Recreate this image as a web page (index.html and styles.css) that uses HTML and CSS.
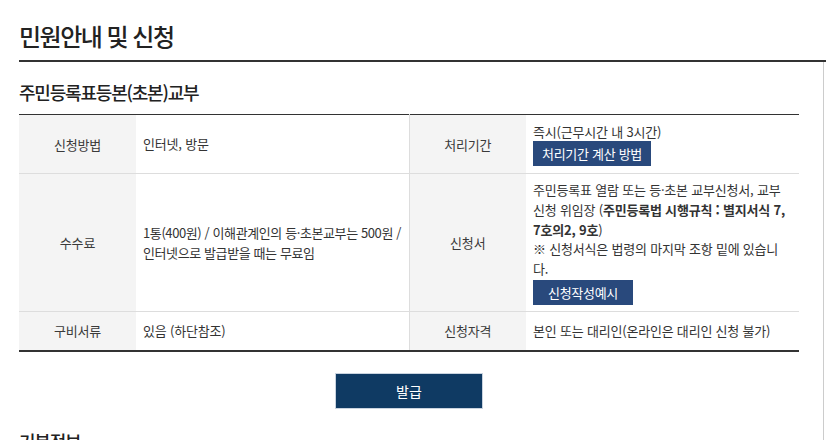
FILE: index.html
```html
<!DOCTYPE html>
<html lang="ko">
<head>
<meta charset="utf-8">
<link rel="stylesheet" href="styles.css">
</head>
<body>
<div class="page">
  <h1 class="title">민원안내 및 신청</h1>
  <div class="content">
    <h2 class="subtitle">주민등록표등본(초본)교부</h2>
    <table class="info">
      <colgroup>
        <col class="c-th"><col class="c-td1"><col class="c-th"><col class="c-td2">
      </colgroup>
      <tr class="r1">
        <th>신청방법</th>
        <td>인터넷, 방문</td>
        <th class="th2">처리기간</th>
        <td>즉시(근무시간 내 3시간)<br><span class="btn">처리기간 계산 방법</span></td>
      </tr>
      <tr class="r2">
        <th>수수료</th>
        <td class="fee">1통(400원) / 이해관계인의 등·초본교부는 500원 /<br>인터넷으로 발급받을 때는 무료임</td>
        <th class="th2">신청서</th>
        <td class="lh">주민등록표 열람 또는 등·초본 교부신청서, 교부<br>신청 위임장 (<b>주민등록법 시행규칙 : 별지서식 7,<br>7호의2, 9호</b>)<br>※ 신청서식은 법령의 마지막 조항 밑에 있습니<br>다.<br><span class="btn btn2">신청작성예시</span></td>
      </tr>
      <tr class="r3">
        <th>구비서류</th>
        <td>있음 (하단참조)</td>
        <th class="th2">신청자격</th>
        <td>본인 또는 대리인(온라인은 대리인 신청 불가)</td>
      </tr>
    </table>
    <div class="actions"><span class="issue">발급</span></div>
    <h2 class="subtitle sub2">기본정보</h2>
  </div>
</div>
</body>
</html>
```
FILE: styles.css
```css
html, body { margin: 0; padding: 0; background: #fff; }
body { font-family: "Noto Sans CJK KR", "Noto Sans", sans-serif; color: #333; overflow: hidden; height: 440px; }
.page { padding-left: 19px; height: 440px; overflow: hidden; }
.title {
  margin: 0;
  padding-top: 18px;
  height: 42px;
  font-size: 24px;
  font-weight: 500;
  letter-spacing: -1.5px;
  line-height: 36px;
  color: #222;
  border-bottom: 2px solid #333;
}
.content {
  border-right: 1px solid #ccc;
  margin-right: 2px;
  padding-right: 24px;
  height: 378px;
  overflow: hidden;
}
.subtitle {
  margin: 0;
  padding-top: 17px;
  height: 35px;
  font-size: 18px;
  font-weight: 500;
  letter-spacing: -1.2px;
  line-height: 26px;
  color: #222;
}
.info {
  width: 100%;
  border-collapse: collapse;
  border-top: 1px solid #333;
  border-bottom: 2px solid #333;
  font-size: 13px;
  letter-spacing: -0.2px;
}
.c-th { width: 117px; }
.c-td1 { width: 273px; }
.info th {
  background: #f4f4f4;
  font-weight: 400;
  color: #3a3a3a;
  text-align: center;
  padding: 0;
}
.info td {
  padding: 0 7px;
  text-align: left;
  vertical-align: middle;
  color: #333;
}
.info tr { border-bottom: 1px solid #ddd; }
.info tr.r3 { border-bottom: 0; }
.th2 { border-left: 1px solid #ddd; }
.r1 { height: 59px; }
.r2 { height: 138px; }
.r3 { height: 39px; }
.fee { line-height: 20px; white-space: nowrap; letter-spacing: -0.4px; }
.lh { line-height: 19.8px; white-space: nowrap; }
.r1 td { line-height: 18px; }
.info b { font-weight: 700; }
.btn {
  display: inline-block;
  background: #29497c;
  color: #fff;
  font-size: 13px;
  line-height: 25px;
  padding: 0 9px;
  letter-spacing: -0.3px;
}
.btn2 { padding: 0 15px; margin-top: 1px; }
.actions {
  display: flex;
  justify-content: center;
  padding-top: 21px;
}
.issue {
  display: flex;
  align-items: center;
  justify-content: center;
  box-sizing: border-box;
  width: 148px;
  height: 36px;
  background: #0f3a63;
  border: 1px solid #c9d3df;
  color: #fff;
  font-size: 14px;
}
.sub2 { padding-top: 19px; }
```
